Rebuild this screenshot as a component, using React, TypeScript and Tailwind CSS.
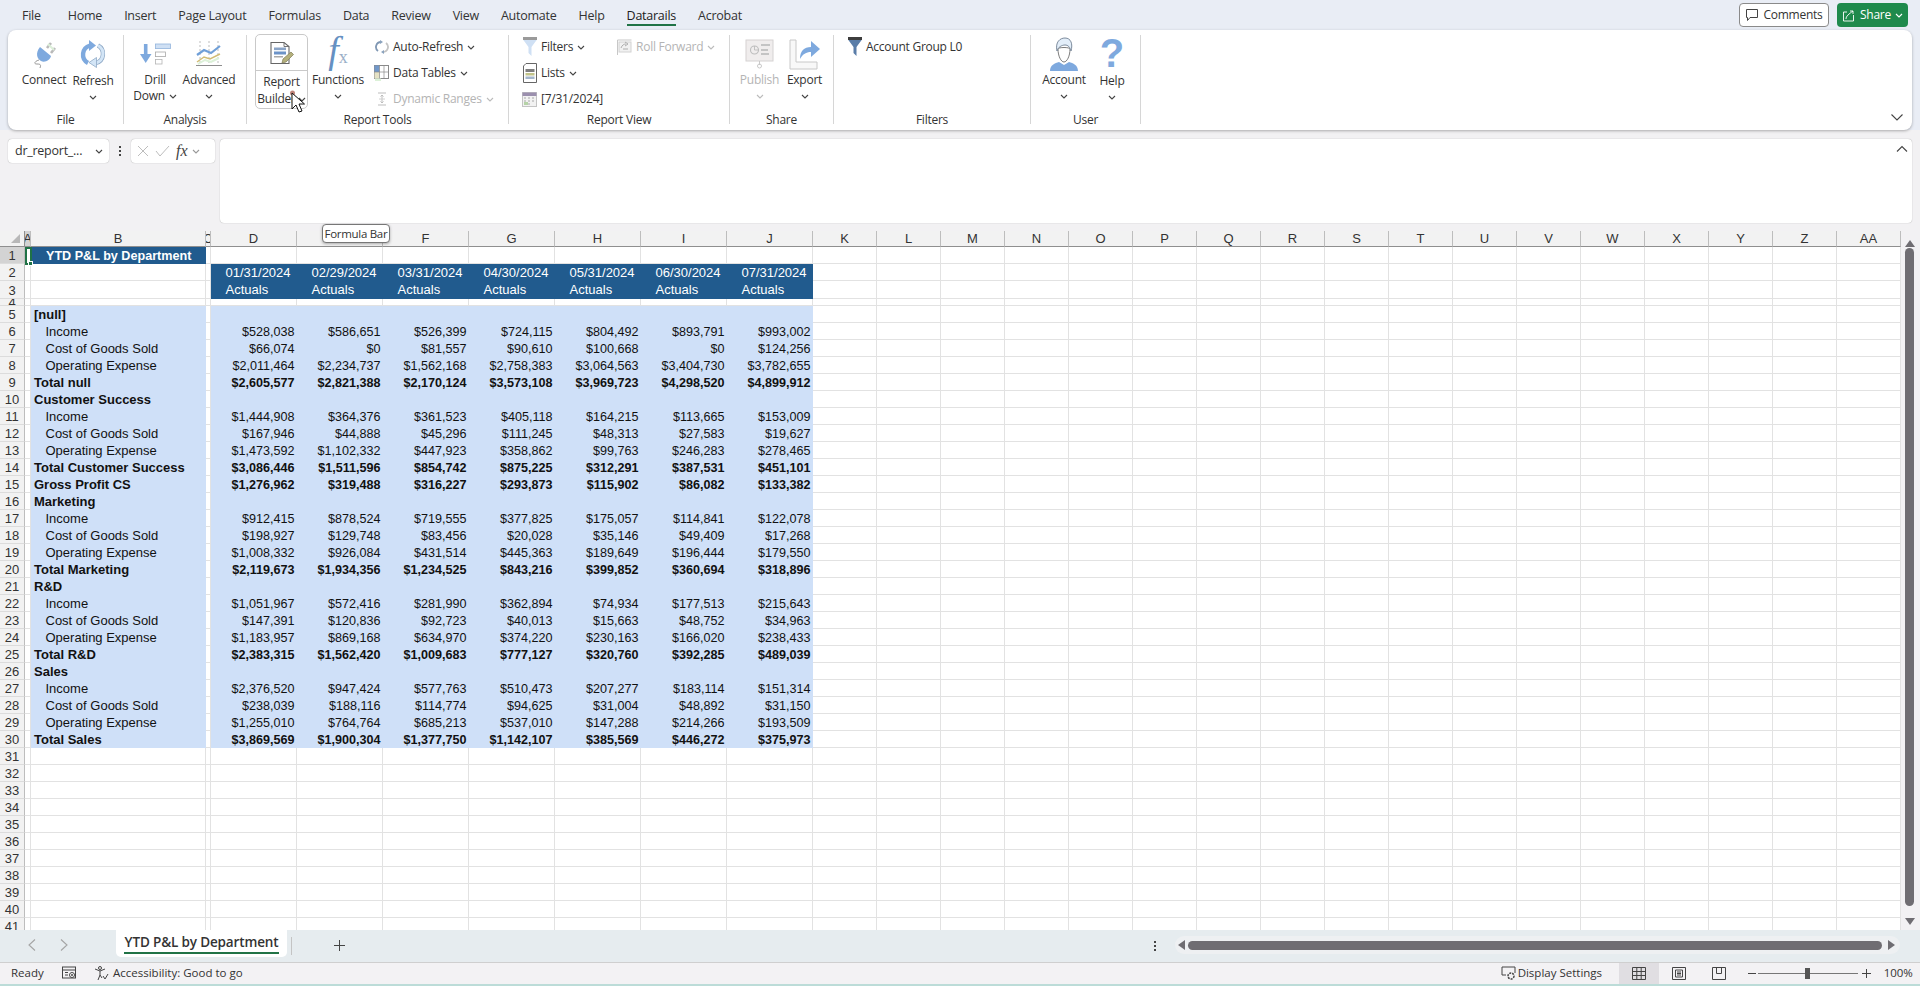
import React from "react";

const LABELS: Record<number, [string, "b" | "i"]> = {
  5: ["[null]", "b"], 6: ["Income", "i"], 7: ["Cost of Goods Sold", "i"], 8: ["Operating Expense", "i"], 9: ["Total null", "b"],
  10: ["Customer Success", "b"], 11: ["Income", "i"], 12: ["Cost of Goods Sold", "i"], 13: ["Operating Expense", "i"], 14: ["Total Customer Success", "b"], 15: ["Gross Profit CS", "b"],
  16: ["Marketing", "b"], 17: ["Income", "i"], 18: ["Cost of Goods Sold", "i"], 19: ["Operating Expense", "i"], 20: ["Total Marketing", "b"],
  21: ["R&D", "b"], 22: ["Income", "i"], 23: ["Cost of Goods Sold", "i"], 24: ["Operating Expense", "i"], 25: ["Total R&D", "b"],
  26: ["Sales", "b"], 27: ["Income", "i"], 28: ["Cost of Goods Sold", "i"], 29: ["Operating Expense", "i"], 30: ["Total Sales", "b"],
};
const VALUES: Record<number, string[]> = {
  6: ["528,038", "586,651", "526,399", "724,115", "804,492", "893,791", "993,002"],
  7: ["66,074", "0", "81,557", "90,610", "100,668", "0", "124,256"],
  8: ["2,011,464", "2,234,737", "1,562,168", "2,758,383", "3,064,563", "3,404,730", "3,782,655"],
  9: ["2,605,577", "2,821,388", "2,170,124", "3,573,108", "3,969,723", "4,298,520", "4,899,912"],
  11: ["1,444,908", "364,376", "361,523", "405,118", "164,215", "113,665", "153,009"],
  12: ["167,946", "44,888", "45,296", "111,245", "48,313", "27,583", "19,627"],
  13: ["1,473,592", "1,102,332", "447,923", "358,862", "99,763", "246,283", "278,465"],
  14: ["3,086,446", "1,511,596", "854,742", "875,225", "312,291", "387,531", "451,101"],
  15: ["1,276,962", "319,488", "316,227", "293,873", "115,902", "86,082", "133,382"],
  17: ["912,415", "878,524", "719,555", "377,825", "175,057", "114,841", "122,078"],
  18: ["198,927", "129,748", "83,456", "20,028", "35,146", "49,409", "17,268"],
  19: ["1,008,332", "926,084", "431,514", "445,363", "189,649", "196,444", "179,550"],
  20: ["2,119,673", "1,934,356", "1,234,525", "843,216", "399,852", "360,694", "318,896"],
  22: ["1,051,967", "572,416", "281,990", "362,894", "74,934", "177,513", "215,643"],
  23: ["147,391", "120,836", "92,723", "40,013", "15,663", "48,752", "34,963"],
  24: ["1,183,957", "869,168", "634,970", "374,220", "230,163", "166,020", "238,433"],
  25: ["2,383,315", "1,562,420", "1,009,683", "777,127", "320,760", "392,285", "489,039"],
  27: ["2,376,520", "947,424", "577,763", "510,473", "207,277", "183,114", "151,314"],
  28: ["238,039", "188,116", "114,774", "94,625", "31,004", "48,892", "31,150"],
  29: ["1,255,010", "764,764", "685,213", "537,010", "147,288", "214,266", "193,509"],
  30: ["3,869,569", "1,900,304", "1,377,750", "1,142,107", "385,569", "446,272", "375,973"],
};
const DATES = ["01/31/2024", "02/29/2024", "03/31/2024", "04/30/2024", "05/31/2024", "06/30/2024", "07/31/2024"];
const COLS = ["A", "B", "C", "D", "E", "F", "G", "H", "I", "J", "K", "L", "M", "N", "O", "P", "Q", "R", "S", "T", "U", "V", "W", "X", "Y", "Z", "AA"];
const ROWS = Array.from({ length: 41 }, (_, i) => i + 1);
const MENU = ["Home", "Insert", "Page Layout", "Formulas", "Data", "Review", "View", "Automate", "Help"];

const Chev = ({ c = "#444" }: { c?: string }) => (
  <svg width="8" height="5" viewBox="0 0 8 5" className="shrink-0"><path d="M1 1l3 3 3-3" fill="none" stroke={c} strokeWidth="1.1" /></svg>
);

const Plug = () => (
  <svg width="24" height="28" viewBox="0 0 24 28">
    <path d="M15 8l4-5M19 13l4-5" stroke="#b9b9b9" strokeWidth="2.6" />
    <path d="M16 4l6 6" stroke="#dcefd8" strokeWidth="2" />
    <path d="M8 7l11 9c-1 4-6 7-10 5S3 13 8 7z" fill="#7ea9de" />
    <path d="M7 20C3 21 1 24 5 24s4 1 3 4" fill="none" stroke="#8d8d8d" strokeWidth="0.9" />
  </svg>
);
const Refresh = () => (
  <svg width="28" height="28" viewBox="0 0 28 28">
    <path d="M11 5.5A9.5 9.5 0 0 0 9 23" fill="none" stroke="#7ea9de" strokeWidth="4.4" />
    <path d="M10 0l7 5.5-7 5.500z" fill="#7ea9de" />
    <path d="M17 23a9.5 9.5 0 0 0 2-17.500" fill="none" stroke="#8fa9c6" strokeWidth="4.4" />
    <path d="M17 23a9.5 9.5 0 0 0 2-17.500" fill="none" stroke="#d3e5f6" strokeWidth="3" />
    <path d="M17.500 17.500l-7.500 5 7.500 5z" fill="#d3e5f6" stroke="#8fa9c6" strokeWidth="0.8" />
  </svg>
);
const Drill = () => (
  <svg width="31" height="22" viewBox="0 0 31 22">
    <path d="M5.700 1v11" stroke="#7ea9de" strokeWidth="3.6" />
    <path d="M0 11h11.500l-5.800 9z" fill="#7ea9de" />
    <rect x="15.500" y="1" width="15" height="4.600" fill="#cfe0f4" stroke="#93b5dc" strokeWidth="0.8" />
    <rect x="15.500" y="9" width="10" height="4.600" fill="#fff" stroke="#a8a8a8" strokeWidth="0.8" />
    <rect x="15.500" y="16.500" width="6.500" height="4.500" fill="#fff" stroke="#b5b5b5" strokeWidth="0.8" />
  </svg>
);
const Advanced = () => (
  <svg width="28" height="28" viewBox="0 0 28 28">
    <path d="M5 1v24M14 1v24M23 1v24" stroke="#b5b5b5" strokeWidth="0.9" strokeDasharray="2 2" />
    <path d="M1 25.500h26" stroke="#8e8e8e" strokeWidth="1" />
    <path d="M2 15l7-5 7 3 9-7" fill="none" stroke="#6f9fd8" strokeWidth="2.2" />
    <path d="M2 22l7-5 6 2 10-5" fill="none" stroke="#d1bd75" strokeWidth="1.500" />
    <path d="M3 24l7-4 6 2 8-4" fill="none" stroke="#dcf1d8" strokeWidth="2" />
  </svg>
);
const ReportIcon = () => (
  <svg width="24" height="24" viewBox="0 0 24 24">
    <path d="M1 1.500h13l5 4v17H1z" fill="#fff" stroke="#666" strokeWidth="1.100" />
    <path d="M14 1.500v4h5" fill="none" stroke="#666" strokeWidth="0.9" />
    <rect x="4" y="6.500" width="12" height="2.600" fill="#8aa4c7" />
    <rect x="4" y="10.500" width="12" height="3" fill="#6c93c8" />
    <rect x="4" y="15" width="9" height="1.500" fill="#a9a9a9" />
    <path d="M12 22l1-4 8-7 2.500 2.500-7.500 7.500z" fill="#b4b07c" stroke="#7f7c55" strokeWidth="0.7" />
  </svg>
);
const PublishIcon = () => (
  <svg width="29" height="30" viewBox="0 0 29 30">
    <rect x="1" y="1" width="27" height="21" fill="#f0eded" stroke="#d5d2d2" />
    <circle cx="9.500" cy="11" r="4" fill="none" stroke="#bdbdbd" strokeWidth="1.100" />
    <path d="M9.500 7v4h4" fill="none" stroke="#bdbdbd" strokeWidth="0.9" />
    <path d="M16 6h9M16 11h7M16 15h8" stroke="#c4c4c4" strokeWidth="2" />
    <path d="M14.500 22v4" stroke="#c9c9c9" />
    <circle cx="14.500" cy="27" r="2" fill="none" stroke="#c9c9c9" />
  </svg>
);
const ExportIcon = () => (
  <svg width="32" height="33" viewBox="0 0 32 33">
    <path d="M1 3h6v22h21v7H1z" fill="#f8f8f8" stroke="#c8c8c8" />
    <path d="M11 22c0-8 4-12 11-12V4l9 8-9 8v-5c-5 0-8 2-11 7z" fill="#7ea9de" />
  </svg>
);
const Person = () => (
  <svg width="30" height="36" viewBox="0 0 30 36">
    <path d="M1 35c0-6 5-8 9-9l5 3 5-3c4 1 9 3 9 9z" fill="#7ea9de" />
    <path d="M9 13c0 7 3 13 6 13s6-6 6-13c0-2-12-2-12 0z" fill="#fff" stroke="#6d6d6d" strokeWidth="0.9" />
    <path d="M8 15C6 6 11 2 16 2c6 0 8 6 6 13-1-4-3-6-6-6s-7 2-8 6z" fill="#e3eef9" stroke="#6f7f92" strokeWidth="0.9" />
  </svg>
);
const Funnel = ({ a = "#9a9a9a", b = "#cfe0f4" }: { a?: string; b?: string }) => (
  <svg width="14" height="20" viewBox="0 0 14 20">
    <path d="M0 0h14v2.500L8.500 10v9L5.500 16v-6L0 2.500z" fill={b} />
    <rect x="0" y="0" width="14" height="3" fill={a} />
  </svg>
);
const ListIcon = () => (
  <svg width="14" height="20" viewBox="0 0 14 20">
    <path d="M.5 3L3 .5h10.500v19H.5z" fill="#fff" stroke="#666" />
    <rect x="2.500" y="6" width="9" height="3" fill="#7f7f7f" />
    <rect x="2.500" y="10" width="9" height="2.500" fill="#c2c48a" />
    <rect x="2.500" y="13.500" width="9" height="2.500" fill="#a4b6cc" />
  </svg>
);
const CalIcon = () => (
  <svg width="15" height="15" viewBox="0 0 15 15">
    <rect x=".5" y=".5" width="14" height="14" fill="#f2f2f2" stroke="#c4c4c4" />
    <rect x=".5" y=".5" width="14" height="3.500" fill="#9b8fae" />
    <path d="M2 6h2M6 6h2M10 6h2M2 9h2M6 9h2M10 9h2M2 12h2M6 12h2" stroke="#a8a8a8" />
    <rect x="2" y="10" width="4" height="3" fill="#b6d3a8" />
  </svg>
);
const AutoIcon = () => (
  <svg width="14" height="14" viewBox="0 0 14 14">
    <path d="M6 2a5 5 0 0 0-3 9" fill="none" stroke="#7f97b3" strokeWidth="1.800" />
    <path d="M8 12a5 5 0 0 0 3-9" fill="none" stroke="#c4c4c4" strokeWidth="1.800" />
    <path d="M5 0l3 2-3 2zM9 10l-3 2 3 2z" fill="#8aa2bd" />
  </svg>
);
const TableIcon = () => (
  <svg width="15" height="16" viewBox="0 0 15 16">
    <rect x=".5" y=".5" width="14" height="13" fill="#fff" stroke="#8a8a8a" />
    <rect x=".5" y=".5" width="5" height="6.500" fill="#7197c9" />
    <rect x=".5" y="7" width="5" height="6.500" fill="#e5e2c5" />
    <path d="M5.500 0v14M10 0v14M0 7h15" stroke="#8a8a8a" strokeWidth=".7" />
    <rect x="1" y="13.500" width="6" height="2.500" fill="#dcf1d8" />
  </svg>
);
const RangeIcon = () => (
  <svg width="12" height="14" viewBox="0 0 12 14">
    <path d="M2 1h8M2 13h8M6 3v8M4.500 4.500L6 3l1.500 1.500M4.500 9.500L6 11l1.500-1.500" fill="none" stroke="#bdbdbd" />
    <path d="M3 7h6" stroke="#d0d0d0" />
  </svg>
);
const RollIcon = () => (
  <svg width="15" height="17" viewBox="0 0 15 17">
    <path d="M.5 1h14M.5 1v15" stroke="#c7c7c7" />
    <rect x="2" y="3" width="12" height="10" fill="#f1f1f1" stroke="#d2d2d2" />
    <path d="M4 9c1-3 3-4 5-4M8 3l3 2-3 2M11 10H6" fill="none" stroke="#adadad" />
  </svg>
);

function BigBtn({ w, icon, l1, l2, chev, dim, nudge }: { w: string; icon: React.ReactNode; l1: string; l2?: string; chev?: boolean; dim?: boolean; nudge?: boolean }) {
  return (
    <div className={`${w} flex flex-col items-center ${dim ? "text-[#b4b4b4]" : "text-[#333]"}`}>
      <div className="h-[37px] flex items-center justify-center">{icon}</div>
      <div className={`h-[16px] leading-[16px] whitespace-nowrap ${nudge ? "mt-[1px]" : ""}`}>{l1}</div>
      <div className="h-[16px] leading-[16px] whitespace-nowrap flex items-center gap-[4px]">
        {l2 && <span>{l2}</span>}
        {chev && <Chev c={dim ? "#bbb" : "#444"} />}
      </div>
    </div>
  );
}
function SmallBtn({ icon, label, chev, dim, iconW = "w-[15px]" }: { icon: React.ReactNode; label: string; chev?: boolean; dim?: boolean; iconW?: string }) {
  return (
    <div className={`h-[26px] flex items-center whitespace-nowrap ${dim ? "text-[#b4b4b4]" : "text-[#333]"}`}>
      <span className={`${iconW} flex justify-center mr-[4px]`}>{icon}</span>
      <span className="mr-[4px]">{label}</span>
      {chev && <Chev c={dim ? "#bbb" : "#444"} />}
    </div>
  );
}
function Group({ w, label, children, cls = "" }: { w: string; label: string; children: React.ReactNode; cls?: string }) {
  return (
    <div className={`${w} h-[89px] flex flex-col border-r border-[#d6d6d6]`}>
      <div className={`h-[77px] shrink-0 flex ${cls}`}>{children}</div>
      <div className="h-[16px] shrink-0 leading-[16px] text-center text-[#333]">{label}</div>
    </div>
  );
}

function cellClass(r: number, c: number) {
  const data = c >= 3 && c <= 9;
  if ((r === 1 && c === 1) || ((r === 2 || r === 3) && data)) return "bg-[#215b8e] text-white";
  if (r >= 5 && r <= 30 && (c === 1 || data)) return "bg-[#cfe0f8] text-[#111]";
  return "bg-white border-r border-b border-[#e2e2e2]";
}

function Cell({ r, c }: { r: number; c: number }) {
  let content: React.ReactNode = null;
  let cls = "pt-[2px]";
  if (c === 1 && r === 1) {
    content = <span className="font-bold">YTD P&amp;L by Department</span>;
    cls = "pt-[2px] pl-[15px]";
  } else if (c === 1 && LABELS[r]) {
    const [t, k] = LABELS[r];
    content = <span className={k === "b" ? "font-bold text-[13px]" : "text-[13px]"}>{t}</span>;
    cls = k === "b" ? "pl-[3px]" : "pl-[14.500px]";
  } else if (c >= 3 && c <= 9 && r === 2) {
    content = DATES[c - 3];
    cls = "pl-[14.500px] text-[13px]";
  } else if (c >= 3 && c <= 9 && r === 3) {
    content = "Actuals";
    cls = "pl-[14.500px] text-[13px]";
  } else if (c >= 3 && c <= 9 && VALUES[r]) {
    content = <span className={LABELS[r][1] === "b" ? "font-bold" : ""}>${VALUES[r][c - 3]}</span>;
    cls = "pt-[2px] justify-end pr-[2.500px]";
  }
  if (c === 0 && r === 1) {
    return (
      <div className="relative bg-white border-2 border-[#1f7246] -mb-[1px] -mr-[1px] z-10">
        <div className="absolute -right-[3px] -bottom-[3px] w-[5px] h-[5px] bg-[#1f7246] border border-white" />
      </div>
    );
  }
  return <div className={`${cellClass(r, c)} flex items-center overflow-hidden whitespace-nowrap ${cls}`}>{content}</div>;
}

export default function App() {
  return (
    <div className="relative w-[1920px] h-[986px] overflow-hidden flex flex-col bg-[#f2f1f3] text-[12px] font-['Open_Sans',sans-serif] tracking-[-0.25px]">
      {/* Title / menu */}
      <div className="h-[30px] shrink-0 bg-[#e9edf5] flex items-center pl-[22px] pr-[12px] text-[#333] text-[12.500px]">
        <span className="mr-[27px] mt-[2px]">File</span>
        <div className="flex gap-[22px] items-center mt-[2px]">
          {MENU.map((m) => <span key={m}>{m}</span>)}
          <span className="relative font-medium text-[#1c1c1c]">Datarails<span className="absolute left-0 right-0 top-[17px] h-[2px] bg-[#217346]" /></span>
          <span>Acrobat</span>
        </div>
        <div className="ml-auto flex gap-[8px] items-center">
          <div className="w-[90px] h-[24px] rounded-[4px] border border-[#8a8a8a] bg-white flex items-center justify-center gap-[4px] text-[12px]">
            <svg width="14" height="14" viewBox="0 0 14 14"><path d="M1.500 1.500h11v8H5L2.500 12.500V9.500h-1z" fill="none" stroke="#444" /></svg>
            Comments
          </div>
          <div className="w-[71px] h-[24px] rounded-[4px] bg-[#1f8a4c] text-white flex items-center justify-center gap-[4px] text-[12px]">
            <svg width="14" height="14" viewBox="0 0 14 14"><path d="M5 4H1.500v9h10V7M4 11c0-3 3-5 7-8M11 3V6M11 3H8" fill="none" stroke="#fff" strokeWidth=".9" /></svg>
            Share
            <Chev c="#fff" />
          </div>
        </div>
      </div>

      {/* Ribbon */}
      <div className="h-[100px] shrink-0 bg-[#e9edf5]">
        <div className="relative h-[100px] ml-[8px] mr-[8px] rounded-lg bg-white shadow-[0_1px_3px_rgba(0,0,0,0.3)] pt-[5px] flex">
          <Group w="w-[116px]" label="File" cls="pl-[8px]">
            <BigBtn w="w-[56px]" icon={<Plug />} l1="Connect" />
            <BigBtn w="w-[42px]" icon={<Refresh />} l1="Refresh" chev nudge />
          </Group>
          <Group w="w-[123px]" label="Analysis" cls="pl-[5px]">
            <BigBtn w="w-[52px]" icon={<Drill />} l1="Drill" l2="Down" chev />
            <BigBtn w="w-[56px]" icon={<Advanced />} l1="Advanced" chev />
          </Group>
          <Group w="w-[262px]" label="Report Tools" cls="pl-[8px]">
            <div className="w-[53px] h-[75px] -mt-[1px] rounded-[5px] border border-[#c9c9c9] flex flex-col items-center text-[#333]">
              <div className="h-[36px] w-full flex items-center justify-center border-b border-[#c9c9c9]"><ReportIcon /></div>
              <div className="h-[19px] leading-[19px] mt-[1px]">Report</div>
              <div className="h-[16px] leading-[16px] flex items-center gap-[2px]">Builder<Chev /></div>
            </div>
            <BigBtn w="w-[60px]" icon={<span className="font-['Liberation_Serif',serif] italic text-[38px] leading-[36px] text-[#6590c2] tracking-normal">f<span className="text-[18px] text-[#9bb0c8] not-italic">x</span></span>} l1="Functions" chev />
            <div className="flex flex-col -mt-[1px] pl-[6px]">
              <SmallBtn icon={<AutoIcon />} label="Auto-Refresh" chev />
              <SmallBtn icon={<TableIcon />} label="Data Tables" chev />
              <SmallBtn icon={<RangeIcon />} label="Dynamic Ranges" chev dim />
            </div>
          </Group>
          <Group w="w-[221px]" label="Report View" cls="pl-[13px]">
            <div className="w-[95px] flex flex-col -mt-[1px]">
              <SmallBtn icon={<Funnel />} label="Filters" chev />
              <SmallBtn icon={<ListIcon />} label="Lists" chev />
              <SmallBtn icon={<CalIcon />} label="[7/31/2024]" />
            </div>
            <div className="flex flex-col -mt-[1px]">
              <SmallBtn icon={<RollIcon />} label="Roll Forward" chev dim />
            </div>
          </Group>
          <Group w="w-[104px]" label="Share" cls="pl-[7px]">
            <BigBtn w="w-[45px]" icon={<PublishIcon />} l1="Publish" chev dim />
            <BigBtn w="w-[45px]" icon={<ExportIcon />} l1="Export" chev />
          </Group>
          <Group w="w-[197px]" label="Filters" cls="pl-[14px]">
            <div className="-mt-[1px]">
              <SmallBtn icon={<Funnel a="#3d3d3d" b="#5a7da8" />} label="Account Group L0" iconW="w-[14px]" />
            </div>
          </Group>
          <Group w="w-[110px]" label="User" cls="pl-[8px]">
            <BigBtn w="w-[50px]" icon={<Person />} l1="Account" chev />
            <BigBtn w="w-[46px]" icon={<span className="font-['Liberation_Sans',sans-serif] font-bold text-[40px] leading-[37px] text-[#7ea9de] tracking-normal">?</span>} l1="Help" chev nudge />
          </Group>
          <div className="ml-auto mr-[8px] mt-[78px] h-[10px]">
            <svg width="14" height="9" viewBox="0 0 14 9"><path d="M1.500 1.500L7 7l5.500-5.500" fill="none" stroke="#444" strokeWidth="1.100" /></svg>
          </div>
        </div>
      </div>

      {/* Formula bar */}
      <div className="h-[101px] shrink-0 pt-[9px] pl-[8px] pr-[8px] flex items-start">
        <div className="w-[101px] h-[24px] rounded-[4px] bg-white shadow-[0_0_1px_rgba(0,0,0,0.4)] flex items-center pl-[7px] pr-[6px] justify-between text-[#333] text-[12.500px]">
          <span>dr_report_...</span><Chev />
        </div>
        <div className="w-[22px] h-[24px] flex flex-col items-center justify-center gap-[2px]">
          <i className="w-[2px] h-[2px] bg-[#444]" /><i className="w-[2px] h-[2px] bg-[#444]" /><i className="w-[2px] h-[2px] bg-[#444]" />
        </div>
        <div className="w-[84px] h-[24px] rounded-[4px] bg-white shadow-[0_0_1px_rgba(0,0,0,0.4)] flex items-center pl-[6px] gap-[6px]">
          <svg width="12" height="12" viewBox="0 0 12 12"><path d="M1 1l10 10M11 1L1 11" stroke="#bdbdbd" /></svg>
          <svg width="15" height="12" viewBox="0 0 15 12"><path d="M1 6l4 5 9-10" fill="none" stroke="#bdbdbd" /></svg>
          <span className="font-['Liberation_Serif',serif] italic text-[16px] text-[#444] tracking-normal mr-[-2px]">fx</span>
          <Chev c="#999" />
        </div>
        <div className="ml-[5px] flex-1 h-[84px] rounded-[4px] bg-white shadow-[0_0_1px_rgba(0,0,0,0.4)] flex justify-end pt-[6px] pr-[4px]">
          <svg width="12" height="8" viewBox="0 0 12 8"><path d="M1 6.500L6 1.500l5 5" fill="none" stroke="#444" strokeWidth="1.100" /></svg>
        </div>
      </div>

      {/* Sheet */}
      <div className="h-[699px] shrink-0 flex overflow-hidden font-['Liberation_Sans',Arial,sans-serif] tracking-normal text-[12.600px]">
        <div className="grid grid-cols-[25px_6px_175px_5px_repeat(7,86px)_repeat(17,64px)] grid-rows-[16px_17px_17px_18px_7px_repeat(37,17px)] h-[699px] overflow-hidden bg-white">
          <div className="bg-[#f2f2f2] border-r border-b border-[#8f8f8f] flex items-end justify-end pr-[4px] pb-[3px]">
            <div className="w-0 h-0 border-l-[9px] border-l-transparent border-b-[9px] border-b-[#b8b8b8]" />
          </div>
          {COLS.map((c, i) => (
            <div key={c} className={`${i === 0 ? "bg-[#d3d3d3]" : "bg-[#f2f2f2]"} border-r border-[#bdbdbd] border-b border-b-[#8f8f8f] flex items-center justify-center overflow-hidden text-[13px] text-[#333]`}>{c}</div>
          ))}
          {ROWS.map((r) => (
            <React.Fragment key={r}>
              <div className={`${r === 1 ? "bg-[#d3d3d3]" : "bg-[#f2f2f2]"} border-r border-[#bdbdbd] border-b border-b-[#dcdcdc] flex items-center justify-center overflow-hidden text-[13px] text-[#333] pt-[2px]`}>{r}</div>
              {COLS.map((_, c) => <Cell key={c} r={r} c={c} />)}
            </React.Fragment>
          ))}
        </div>
        <div className="flex-1 flex flex-col items-start pl-[4px] bg-[#f2f1f3]">
          <div className="h-[17px] w-[10px] flex items-end justify-center pb-[1px]"><div className="w-0 h-0 border-x-[5px] border-x-transparent border-b-[7px] border-b-[#6f6d72]" /></div>
          <div className="w-[9px] h-[662px] rounded-full bg-[#6f6d72]" />
          <div className="h-[17px] w-[10px] mt-[7px] flex items-center justify-center"><div className="w-0 h-0 border-x-[5px] border-x-transparent border-t-[7px] border-t-[#6f6d72]" /></div>
        </div>
      </div>

      {/* Tabs */}
      <div className="h-[32px] shrink-0 bg-[#e6ecef] flex items-start">
        <div className="w-[116px] h-[30px] flex items-center pl-[27px] gap-[22px]">
          <svg width="10" height="14" viewBox="0 0 10 14"><path d="M8 1.500L2 7l6 5.500" fill="none" stroke="#a5a5a5" strokeWidth="1.100" /></svg>
          <svg width="10" height="14" viewBox="0 0 10 14"><path d="M2 1.500L8 7l-6 5.500" fill="none" stroke="#a5a5a5" strokeWidth="1.100" /></svg>
        </div>
        <div className="w-[171px] h-[27px] bg-white rounded-b-[5px] flex items-center justify-center pb-[3px] text-[#333] text-[13.500px] font-semibold relative tracking-[-0.15px] whitespace-nowrap">
          YTD P&amp;L by Department
          <span className="absolute left-[8px] right-[8px] bottom-[3px] h-[2px] bg-[#217346]" />
        </div>
        <div className="ml-[4px] mt-[7px] h-[18px] w-px bg-[#c4c4c4]" />
        <svg className="ml-[41px] mt-[9px]" width="13" height="13" viewBox="0 0 13 13"><path d="M6.500 1v11M1 6.500h11" stroke="#444" /></svg>
        <div className="ml-[806px] mt-[7px] h-[18px] w-[6px] flex flex-col items-center justify-center gap-[2px]">
          <i className="w-[2px] h-[2px] bg-[#444]" /><i className="w-[2px] h-[2px] bg-[#444]" /><i className="w-[2px] h-[2px] bg-[#444]" />
        </div>
        <div className="ml-[17px] mt-[6px] w-[725px] h-[18px] rounded-full bg-[#eef0f2] flex items-center pl-[3px] gap-[3px]">
          <div className="w-0 h-0 border-y-[5px] border-y-transparent border-r-[7px] border-r-[#6f6d72]" />
          <div className="w-[694px] h-[9px] rounded-full bg-[#6f6d72]" />
          <div className="w-0 h-0 ml-[3px] border-y-[5px] border-y-transparent border-l-[7px] border-l-[#6f6d72]" />
        </div>
      </div>

      {/* Status */}
      <div className="h-[24px] shrink-0 bg-[#f3f2f4] border-t border-[#cfcfcf] border-b-2 border-b-[#bcdcd8] flex items-center text-[#333] text-[11.500px] tracking-normal pb-[1px]">
        <span className="ml-[11px] w-[51px]">Ready</span>
        <svg width="15" height="14" viewBox="0 0 15 14"><rect x=".5" y="1" width="13" height="11" fill="none" stroke="#444" /><path d="M1 4h12M3 6.500h3M3 9h3" stroke="#444" /><circle cx="10" cy="9" r="2.500" fill="#fff" stroke="#444" /><circle cx="10" cy="9" r="1" fill="#444" /></svg>
        <svg className="ml-[17px]" width="15" height="15" viewBox="0 0 15 15"><circle cx="6" cy="2" r="1.500" fill="none" stroke="#444" /><path d="M1 3l5 2 5-2M6 5v4l-2 5M6 9l2 3M9 10l2 3 3-5" fill="none" stroke="#444" /></svg>
        <span className="ml-[4px]">Accessibility: Good to go</span>
        <svg className="ml-[1258px]" width="15" height="14" viewBox="0 0 15 14"><path d="M5 9H1V1h13v6" fill="none" stroke="#444" /><circle cx="10" cy="10" r="3" fill="none" stroke="#444" strokeWidth="1.500" strokeDasharray="2 1" /></svg>
        <span className="ml-[2px] w-[101px]">Display Settings</span>
        <div className="w-[40px] h-[21px] bg-[#e0dee2] flex items-center justify-center">
          <svg width="14" height="13" viewBox="0 0 14 13"><path d="M.5.5h13v12H.5zM.5 4.500h13M.5 8.500h13M4.800.5v12M9.200.5v12" fill="none" stroke="#444" /></svg>
        </div>
        <div className="w-[40px] flex justify-center">
          <svg width="14" height="13" viewBox="0 0 14 13"><path d="M.5.5h13v12H.5zM3.500 3h7v7h-7zM5 5h4M5 6.500h4M5 8h4" fill="none" stroke="#444" /></svg>
        </div>
        <div className="w-[40px] flex justify-center">
          <svg width="14" height="13" viewBox="0 0 14 13"><path d="M.5.5h13v12H.5zM4.500.5v6h5v-6" fill="none" stroke="#444" /></svg>
        </div>
        <div className="ml-[9px] w-[8px] h-px bg-[#444]" />
        <div className="ml-[2px] w-[100px] h-px bg-[#777] flex items-center justify-center">
          <div className="w-[5px] h-[11px] bg-[#555] shrink-0" />
        </div>
        <svg className="ml-[4px]" width="9" height="9" viewBox="0 0 9 9"><path d="M4.500 0v9M0 4.500h9" stroke="#444" /></svg>
        <span className="ml-[13px]">100%</span>
      </div>

      {/* Tooltip */}
      <div className="absolute left-[322px] top-[224px] w-[68px] h-[19px] rounded-[4px] border border-[#777] bg-white shadow-[0_1px_3px_rgba(0,0,0,0.3)] flex items-center justify-center text-[11.500px] text-[#333] tracking-[-0.3px] whitespace-nowrap">Formula Bar</div>

      {/* Mouse cursor */}
      <svg className="absolute left-[290px] top-[90px]" width="16" height="24" viewBox="0 0 16 24">
        <circle cx="2.500" cy="3" r="2.500" fill="#b0665a" opacity=".8" />
        <path d="M2 3v16l4-4 3 7 3-1-3-7h5.500z" fill="#fff" stroke="#111" strokeWidth="1" />
      </svg>
    </div>
  );
}
